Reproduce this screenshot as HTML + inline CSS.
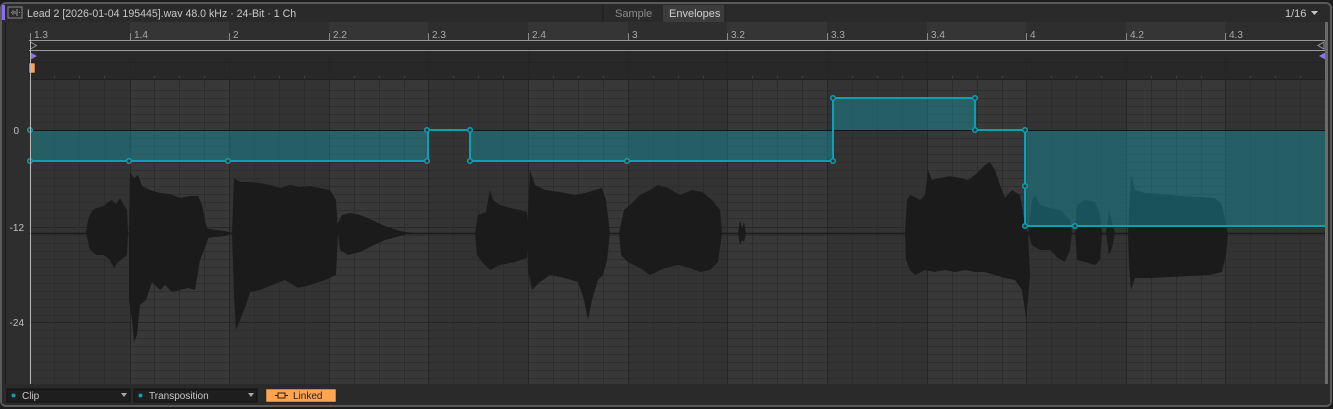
<!DOCTYPE html>
<html><head><meta charset="utf-8"><style>
*{margin:0;padding:0;box-sizing:border-box}
body{width:1333px;height:409px;background:#1c1c1c;overflow:hidden;font-family:"Liberation Sans",sans-serif;position:relative}
</style></head><body>
<svg width="1333" height="409" style="position:absolute;left:0;top:0" font-family="Liberation Sans, sans-serif">
<rect x="1" y="3" width="1330" height="403" rx="5" fill="#2a2a2a" stroke="#5a5a5a" stroke-width="2"/>
<rect x="2" y="5" width="3" height="15" fill="#8a6cf0"/>
<rect x="6" y="5" width="1320" height="17" fill="#2a2a2a"/>
<rect x="8" y="7" width="14" height="11" fill="none" stroke="#888" stroke-width="1"/>
<path d="M11 12.5h1M13 10v5M15 11v3M17 9v7M19 12.5h1" stroke="#999" stroke-width="1"/>
<text x="27" y="17" font-size="10.6" fill="#c8c8c8">Lead 2 [2026-01-04 195445].wav  48.0 kHz · 24-Bit · 1 Ch</text>
<rect x="603" y="5" width="60" height="17" fill="#2a2a2a"/>
<rect x="663" y="5" width="62" height="17" fill="#3c3c3c"/>
<line x1="603" y1="5" x2="603" y2="22" stroke="#1c1c1c"/><line x1="725" y1="5" x2="725" y2="22" stroke="#1c1c1c"/>
<text x="615" y="17" font-size="11" fill="#8a8a8a">Sample</text>
<text x="669" y="17" font-size="11" fill="#d0d0d0">Envelopes</text>
<text x="1285" y="17" font-size="11" fill="#c8c8c8">1/16</text>
<path d="M1311 11h7l-3.5 4z" fill="#c8c8c8"/>
<rect x="6" y="22" width="23" height="362" fill="#2e2e2e"/>
<line x1="5.5" y1="22" x2="5.5" y2="384" stroke="#1a1a1a"/>
<rect x="29" y="22" width="1297" height="18" fill="#2e2e2e"/>
<g fill="#353535">
<rect x="130" y="22" width="99" height="18"/><rect x="329" y="22" width="99" height="18"/><rect x="528" y="22" width="100" height="18"/><rect x="727" y="22" width="100" height="18"/><rect x="927" y="22" width="99" height="18"/><rect x="1126" y="22" width="99" height="18"/>
</g>
<g font-size="10" fill="#a8a8a8">
<text x="34" y="38">1.3</text><text x="134" y="38">1.4</text><text x="233" y="38">2</text><text x="333" y="38">2.2</text><text x="432" y="38">2.3</text><text x="532" y="38">2.4</text><text x="632" y="38">3</text><text x="731" y="38">3.2</text><text x="831" y="38">3.3</text><text x="931" y="38">3.4</text><text x="1030" y="38">4</text><text x="1130" y="38">4.2</text><text x="1229" y="38">4.3</text>
</g>
<g stroke="#8a8a8a">
<path d="M30.5 33v7M130.5 33v7M229.5 33v7M329.5 33v7M428.5 33v7M528.5 33v7M628.5 33v7M727.5 33v7M827.5 33v7M927.5 33v7M1026.5 33v7M1126.5 33v7M1225.5 33v7"/>
</g>
<rect x="29" y="40" width="1297" height="11" fill="#2a2a2a"/>
<line x1="29" y1="40.5" x2="1326" y2="40.5" stroke="#9a9a9a"/>
<line x1="29" y1="50.5" x2="1326" y2="50.5" stroke="#9a9a9a"/>
<path d="M30.5 42l6 3.5-6 3.5z" fill="none" stroke="#999"/>
<path d="M1324 42l-6 3.5 6 3.5z" fill="none" stroke="#999"/>
<rect x="29" y="51" width="1297" height="29" fill="#282828"/>
<line x1="29" y1="62.5" x2="1326" y2="62.5" stroke="#222"/>
<line x1="29" y1="79.5" x2="1326" y2="79.5" stroke="#202020"/>
<path d="M30 52l7 4-7 4z" fill="#8b72e8"/>
<path d="M1326 52l-7 4 7 4z" fill="#8b72e8"/>
<rect x="29" y="63" width="6" height="10" fill="#ffa450" stroke="#111" stroke-width="0.5"/>
<g stroke="#444">
<path d="M54.5 76v2M79.5 76v2M104.5 76v2M154.5 76v2M179.5 76v2M204.5 76v2M254.5 76v2M279.5 76v2M304.5 76v2M354.5 76v2M379.5 76v2M404.5 76v2M453.5 76v2M478.5 76v2M503.5 76v2M553.5 76v2M578.5 76v2M603.5 76v2M653.5 76v2M678.5 76v2M703.5 76v2M752.5 76v2M777.5 76v2M802.5 76v2M852.5 76v2M877.5 76v2M902.5 76v2M952.5 76v2M977.5 76v2M1002.5 76v2M1051.5 76v2M1076.5 76v2M1101.5 76v2M1151.5 76v2M1176.5 76v2M1201.5 76v2M1250.5 76v2M1275.5 76v2M1300.5 76v2"/>
</g>
<rect x="29" y="80" width="1297" height="304" fill="#333"/>
<g fill="#383838">
<rect x="130" y="80" width="99" height="304"/><rect x="329" y="80" width="99" height="304"/><rect x="528" y="80" width="100" height="304"/><rect x="727" y="80" width="100" height="304"/><rect x="927" y="80" width="99" height="304"/><rect x="1126" y="80" width="99" height="304"/>
</g>
<g stroke="#2e2e2e" stroke-width="1">
<path d="M29 90.5h1297M29 98.5h1297M29 106.5h1297M29 114.5h1297M29 122.5h1297M29 138.5h1297M29 146.5h1297M29 154.5h1297M29 162.5h1297M29 170.5h1297M29 178.5h1297M29 186.5h1297M29 194.5h1297M29 202.5h1297M29 210.5h1297M29 218.5h1297M29 235.5h1297M29 243.5h1297M29 251.5h1297M29 259.5h1297M29 267.5h1297M29 275.5h1297M29 283.5h1297M29 291.5h1297M29 299.5h1297M29 307.5h1297M29 315.5h1297M29 330.5h1297M29 338.5h1297M29 346.5h1297M29 354.5h1297M29 362.5h1297M29 370.5h1297M29 378.5h1297"/>
</g>
<path d="M29 227.5h1297M29 322.5h1297" stroke="#262626"/>
<g stroke="#2d2d2d">
<path d="M54.5 80v304M79.5 80v304M104.5 80v304M154.5 80v304M179.5 80v304M204.5 80v304M254.5 80v304M279.5 80v304M304.5 80v304M354.5 80v304M379.5 80v304M404.5 80v304M453.5 80v304M478.5 80v304M503.5 80v304M553.5 80v304M578.5 80v304M603.5 80v304M653.5 80v304M678.5 80v304M703.5 80v304M752.5 80v304M777.5 80v304M802.5 80v304M852.5 80v304M877.5 80v304M902.5 80v304M952.5 80v304M977.5 80v304M1002.5 80v304M1051.5 80v304M1076.5 80v304M1101.5 80v304M1151.5 80v304M1176.5 80v304M1201.5 80v304M1250.5 80v304M1275.5 80v304M1300.5 80v304"/>
</g>
<g stroke="#252525">
<path d="M130.5 51v333M229.5 51v333M329.5 51v333M428.5 51v333M528.5 51v333M628.5 51v333M727.5 51v333M827.5 51v333M927.5 51v333M1026.5 51v333M1126.5 51v333M1225.5 51v333"/>
</g>
<g font-size="10" fill="#c0c0c0" text-anchor="end">
<text x="19" y="134">0</text><text x="24" y="231">-12</text><text x="24" y="326">-24</text>
</g>
<line x1="29" y1="233.5" x2="1326" y2="233.5" stroke="#1b1b1b" stroke-width="1.5"/>
<g fill="#1b1b1b">
<path d="M86 233 C88 215 92 210 96 208 L104 206 L108 202 L112 200 L116 204 L120 198 L124 205 L127 210 L128 233 L127 255 L118 262 L114 268 L110 260 L104 255 L96 255 L90 250 Z"/>
<path d="M129 233 L130 172 L134 178 L138 175 L142 186 L150 190 L160 193 L170 194 L180 198 L190 196 L198 196 L202 205 L206 225 L210 233 L206 245 L200 260 L195 290 L188 288 L180 290 L172 292 L165 285 L160 290 L152 282 L146 300 L140 305 L137 335 L134 342 L132 320 L129 300 Z"/>
<path d="M206 228 L215 230 L225 231 L232 233 L225 236 L215 237 L206 238 Z"/>
<path d="M232 233 L234 178 L240 182 L250 182 L260 183 L270 185 L280 188 L290 185 L300 187 L310 186 L320 188 L330 190 L336 200 L338 233 L336 275 L325 280 L310 285 L298 288 L285 280 L272 285 L260 290 L250 292 L246 305 L240 320 L236 330 L234 295 Z"/>
<path d="M337 225 L342 215 L350 213 L360 215 L372 220 L385 226 L400 231 L412 233 L400 236 L385 240 L372 246 L360 252 L348 255 L340 250 Z"/>
<path d="M475 233 L478 215 L486 212 L490 190 L493 200 L500 205 L510 208 L520 210 L527 212 L528 233 L527 258 L515 262 L500 265 L490 270 L482 262 L477 255 Z"/>
<path d="M527 233 L530 170 L535 185 L545 190 L560 192 L575 195 L585 193 L595 190 L602 188 L606 200 L610 233 L607 260 L603 275 L598 280 L592 300 L588 320 L584 300 L578 282 L565 278 L550 275 L540 282 L532 290 L528 270 Z"/>
<path d="M619 233 L624 210 L630 205 L640 195 L650 190 L658 185 L668 188 L680 195 L692 190 L702 192 L712 200 L720 210 L722 233 L718 262 L710 270 L700 272 L690 268 L678 265 L665 268 L650 275 L640 268 L628 262 L621 255 Z"/>
<path d="M738 233 L740 220 L742 228 L744 222 L746 233 L744 242 L742 240 L740 245 Z"/>
<path d="M905 233 L907 200 L910 195 L915 197 L920 200 L925 195 L928 170 L932 180 L940 178 L950 176 L960 178 L968 180 L975 175 L980 170 L985 165 L990 162 L995 170 L1000 185 L1005 198 L1012 190 L1020 195 L1025 225 L1028 233 L1030 275 L1028 300 L1026 318 L1022 290 L1015 280 L1005 278 L995 275 L985 272 L975 272 L965 270 L955 272 L945 270 L935 272 L925 270 L915 275 L910 270 L906 260 Z"/>
<path d="M1028 233 L1032 200 L1035 195 L1040 205 L1050 208 L1060 210 L1065 215 L1070 220 L1072 233 L1070 250 L1065 262 L1058 258 L1050 250 L1040 250 L1032 245 Z"/>
<path d="M1075 233 L1077 205 L1085 200 L1095 202 L1100 215 L1102 233 L1100 260 L1095 265 L1085 262 L1077 260 Z"/>
<path d="M1106 233 L1109 210 L1112 222 L1115 233 L1112 248 L1109 255 Z"/>
<path d="M1128 233 L1131 175 L1135 190 L1145 193 L1160 194 L1180 196 L1200 197 L1215 198 L1222 205 L1226 225 L1228 233 L1226 255 L1222 272 L1210 275 L1190 276 L1170 277 L1150 278 L1135 278 L1131 290 L1129 265 Z"/>
</g>
<g fill="#1a8a9a" fill-opacity="0.5">
<rect x="30" y="130" width="398" height="31"/>
<rect x="470" y="130" width="363" height="31"/>
<rect x="833" y="98" width="142" height="32"/>
<rect x="1025" y="130" width="301" height="96"/>
</g>
<line x1="29" y1="130.5" x2="1326" y2="130.5" stroke="#151515"/>
<path d="M30 161H428V130H470V161H833V98H975V130H1025V226H1326" fill="none" stroke="#0e9fb2" stroke-width="2"/>
<g fill="#333" stroke="#0e9fb2" stroke-width="1.5">
<circle cx="30" cy="130" r="2.3"/><circle cx="30" cy="161" r="2.3"/><circle cx="129" cy="161" r="2.3"/><circle cx="228" cy="161" r="2.3"/><circle cx="427" cy="161" r="2.3"/><circle cx="427" cy="130" r="2.3"/><circle cx="470" cy="130" r="2.3"/><circle cx="470" cy="161" r="2.3"/><circle cx="627" cy="161" r="2.3"/><circle cx="833" cy="161" r="2.3"/><circle cx="833" cy="98" r="2.3"/><circle cx="975" cy="98" r="2.3"/><circle cx="975" cy="130" r="2.3"/><circle cx="1025" cy="130" r="2.3"/><circle cx="1025" cy="186" r="2.3"/><circle cx="1025" cy="226" r="2.3"/><circle cx="1075" cy="226" r="2.3"/>
</g>
<line x1="30.5" y1="40" x2="30.5" y2="384" stroke="#b8b8b8"/>
<rect x="1325" y="22" width="3" height="362" fill="#6a6a6a"/>
<rect x="2" y="384" width="1328" height="20" fill="#2a2a2a"/>
<rect x="7" y="389" width="123" height="13" fill="#1e1e1e" stroke="#111"/>
<circle cx="13.5" cy="395.5" r="2" fill="#0e9fb2"/>
<text x="22" y="399" font-size="10" fill="#c8c8c8">Clip</text>
<path d="M121 393h6l-3 4z" fill="#aaa"/>
<rect x="134" y="389" width="123" height="13" fill="#1e1e1e" stroke="#111"/>
<circle cx="140.5" cy="395.5" r="2" fill="#0e9fb2"/>
<text x="149" y="399" font-size="10" fill="#c8c8c8">Transposition</text>
<path d="M248 393h6l-3 4z" fill="#aaa"/>
<rect x="266" y="389" width="70" height="13" fill="#ffa450" stroke="#222" stroke-width="0.5"/>
<path d="M278 393h7v5h-7zM275 395.5h3M285 395.5h3" fill="none" stroke="#222"/>
<text x="293" y="399" font-size="10" fill="#222">Linked</text>
</svg>
</body></html>
